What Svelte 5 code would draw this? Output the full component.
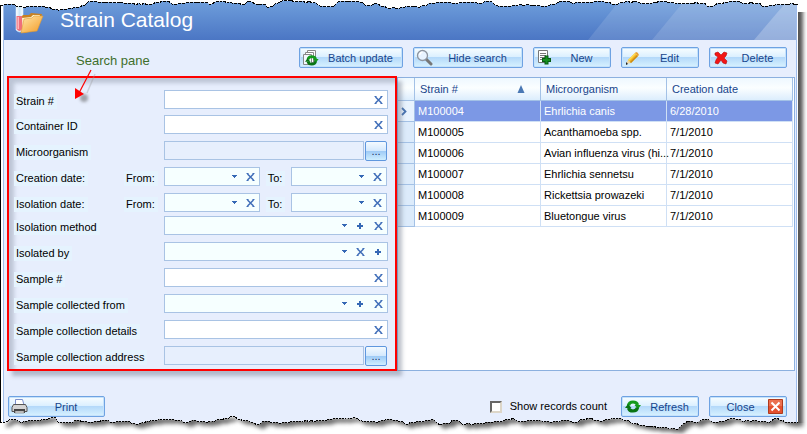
<script>
  const fields = [
    { id: 'strain', label: 'Strain #', kind: 'text' },
    { id: 'container', label: 'Container ID', kind: 'text' },
    { id: 'microorganism', label: 'Microorganism', kind: 'lookup' },
    { id: 'creation', label: 'Creation date:', kind: 'dates' },
    { id: 'isolation', label: 'Isolation date:', kind: 'dates' },
    { id: 'method', label: 'Isolation method', kind: 'combo', icons: ['plus', 'cross'] },
    { id: 'isolated-by', label: 'Isolated by', kind: 'combo', icons: ['cross', 'plus'] },
    { id: 'sample', label: 'Sample #', kind: 'text' },
    { id: 'collected-from', label: 'Sample collected from', kind: 'combo', icons: ['plus', 'cross'] },
    { id: 'details', label: 'Sample collection details', kind: 'text' },
    { id: 'address', label: 'Sample collection address', kind: 'lookup' }
  ];

  const rows = [
    ['M100004', 'Ehrlichia canis', '6/28/2010'],
    ['M100005', 'Acanthamoeba spp.', '7/1/2010'],
    ['M100006', 'Avian influenza virus (hi...', '7/1/2010'],
    ['M100007', 'Ehrlichia sennetsu', '7/1/2010'],
    ['M100008', 'Rickettsia prowazeki', '7/1/2010'],
    ['M100009', 'Bluetongue virus', '7/1/2010']
  ];

  // Key points of the torn paper edges.
  const topEdge = [
    [0, 5], [10, 4], [22, 7], [40, 6], [55, 9], [60, 10], [70, 8], [80, 7], [85, 5], [88, 2], [95, 1], [105, 3], [120, 2], [130, 4],
    [150, 4], [165, 1], [175, 4], [185, 3], [200, 2], [212, 4], [218, 1], [235, 3], [242, 5], [248, 1], [255, 4], [262, 4], [270, 7],
    [278, 3], [285, 0], [300, 2], [315, 2], [320, 6], [332, 7], [338, 2], [345, 1], [360, 2], [368, 6], [375, 3], [387, 8], [400, 8],
    [408, 6], [420, 7], [432, 3], [445, 2], [455, 3], [470, 2], [480, 3], [488, 1], [495, 5], [505, 7], [515, 5], [530, 5], [545, 6],
    [555, 4], [562, 1], [575, 3], [590, 2], [600, 1], [615, 4], [625, 2], [637, 2], [645, 4], [665, 1], [675, 4], [690, 3], [702, 3],
    [710, 6], [715, 5], [725, 2], [735, 1], [745, 3], [757, 3], [765, 6], [775, 5], [785, 4], [798, 4]
  ];
  const bottomEdge = [
    [0, 8], [6, 8], [12, 5], [16, 6], [20, 8], [28, 7], [38, 6], [48, 5], [55, 3], [58, 8], [70, 9], [76, 6], [90, 8], [105, 6],
    [113, 8], [125, 7], [136, 10], [150, 7], [165, 5], [178, 6], [185, 9], [192, 6], [205, 8], [215, 7], [225, 4], [232, 2],
    [240, 5], [250, 8], [257, 11], [265, 7], [270, 8], [282, 9], [300, 7], [320, 7], [335, 4], [345, 5], [355, 3], [362, 7],
    [375, 8], [388, 5], [396, 6], [408, 10], [418, 7], [425, 7], [433, 5], [440, 11], [447, 9], [455, 6], [462, 10], [478, 10],
    [490, 8], [503, 7], [513, 4], [520, 8], [530, 6], [537, 6], [550, 8], [565, 6], [575, 8], [588, 4], [600, 7], [618, 4],
    [630, 8], [645, 12], [660, 13], [678, 15], [685, 9], [688, 7], [695, 9], [705, 5], [715, 8], [725, 7], [732, 4], [745, 7],
    [757, 7], [770, 8], [777, 4], [785, 8], [798, 9]
  ];

  function roughen(points) {
    const out = [];
    points.forEach(([x, y], i) => {
      out.push(`${x},${y}`);
      const next = points[i + 1];
      if (!next) return;
      const steps = Math.max(1, Math.round((next[0] - x) / 3));
      for (let s = 1; s < steps; s++) {
        const t = s / steps;
        const wobble = (s + i) % 2 ? 1 : -1;
        out.push(`${Math.round(x + (next[0] - x) * t)},${Math.max(0, Math.round(y + (next[1] - y) * t + wobble * 0.7))}`);
      }
    });
    return out.join(' ');
  }
  const topLine = roughen(topEdge);
  const bottomLine = roughen(bottomEdge);
</script>

{#snippet glyph(name)}
  {#if name === 'cross'}
    <svg width="9" height="8" viewBox="0 0 9 8"><path d="M1.500 1l6 6M7.500 1l-6 6" stroke="#3f6db8" stroke-width="1.500" /><path d="M.5 .5h2M6.500 .5h2M.5 7.500h2M6.500 7.500h2" stroke="#3f6db8" /></svg>
  {:else if name === 'plus'}
    <svg width="6" height="6" viewBox="0 0 6 6"><path d="M0 3h6M3 0v6" stroke="#3568b5" stroke-width="2" /></svg>
  {:else}
    <svg width="5" height="3" viewBox="0 0 5 3"><path d="M0 0h5v1h-1v1h-1v1h-1v-1h-1v-1h-1z" fill="#3568b5" /></svg>
  {/if}
{/snippet}

{#snippet dateBox(id, label)}
  <div class="field tinted">
    <input {id} type="text" aria-label={label} />
    <button class="mini arrow" type="button" aria-label="Open calendar">{@render glyph('arrow')}</button>
    <button class="mini" type="button" aria-label="Clear">{@render glyph('cross')}</button>
  </div>
{/snippet}

{#snippet sync()}
  <path d="M3.500 6.500C4 3.500 6 3 8 3s4 1 4.500 3" fill="none" stroke="#149a1c" stroke-width="3.200" />
  <path d="M9.500 6h6.500l-3 4z" fill="#149a1c" />
  <path d="M12.500 8.500C12 11.500 10 12 8 12s-4-1-4.500-3" fill="none" stroke="#0a7413" stroke-width="3.200" />
  <path d="M6.500 9H0l3-4z" fill="#0a7413" />
{/snippet}

<div class="page">
  <main class="window">
    <header>
      <svg class="streaks" width="208" height="40" viewBox="0 0 208 40" aria-hidden="true">
        <path d="M0 40L32 0H208V40z" fill="#fff" fill-opacity=".12" />
        <path d="M64 40L97 0H208V40z" fill="#fff" fill-opacity=".13" />
        <path d="M166 40L200 0H208V40z" fill="#fff" fill-opacity=".24" />
      </svg>
      <svg class="logo" width="32" height="40" viewBox="0 0 32 40" aria-hidden="true">
        <defs>
          <linearGradient id="folder" x1="0" y1="0" x2="1" y2="1"><stop offset="0" stop-color="#ffe6a8" /><stop offset="1" stop-color="#f39a25" /></linearGradient>
          <linearGradient id="tube"><stop offset="0" stop-color="#fff" /><stop offset=".5" stop-color="#cde8f8" /><stop offset="1" stop-color="#fff" /></linearGradient>
        </defs>
        <path d="M4 4h7v26q-3 4-7 0z" fill="url(#tube)" stroke="#dcecf8" stroke-width=".6" />
        <path d="M4.500 16h6v13q-3 4-6 0z" fill="#ef6f7b" /><path d="M5.500 17h1.500v12H5.500z" fill="#ffb4b9" />
        <path d="M10 16l1-1h6l2-2 11 1-5 16-13 3z" fill="#c98222" />
        <path d="M10 18l9-1 2-2 7 0-4 14-13 3z" fill="#fff2cc" />
        <path d="M9 33l3-14 8-1 2-2h9l-6 15z" fill="url(#folder)" stroke="#e19a30" stroke-width=".6" />
      </svg>
      <h1>Strain Catalog</h1>
    </header>

    <nav class="toolbar">
      <span class="callout">Search pane</span>
      <button class="btn" type="button">
        <svg width="17" height="17" viewBox="0 0 17 17"><path d="M5.500 1.500h8v10h-8z" fill="#fff" stroke="#888" /><path d="M3.500 3.500h8v10h-8z" fill="#fff" stroke="#888" /><path d="M1.500 5.500h8v10h-8z" fill="#f4f8ff" stroke="#888" /><g transform="translate(3 5) scale(.85)">{@render sync()}</g></svg>
        <span>Batch update</span>
      </button>
      <button class="btn wide" type="button">
        <svg width="17" height="17" viewBox="0 0 17 17"><path d="M10 10l5 5" stroke="#777" stroke-width="3" stroke-linecap="round" /><circle cx="6.500" cy="6.500" r="5" fill="#e8f3ff" stroke="#8d949f" stroke-width="1.300" /><path d="M3.500 6q.5-2.500 3-3" fill="none" stroke="#fff" stroke-width="1.500" /></svg>
        <span>Hide search</span>
      </button>
      <button class="btn small" type="button">
        <svg width="17" height="17" viewBox="0 0 17 17"><path d="M2.500 1.500h9v12h-9z" fill="#fff" stroke="#777" /><path d="M4 4.500h6M4 6.500h6M4 8.500h5M4 10.500h3" stroke="#777" /><path d="M6 11h9M10.500 6.500v9" stroke="#075d10" stroke-width="4" /><path d="M7 11h7M10.500 7.500v7" stroke="#168f20" stroke-width="2" /></svg>
        <span>New</span>
      </button>
      <button class="btn small" type="button">
        <svg width="17" height="17" viewBox="0 0 17 17"><path d="M2 15l2-4 3 3z" fill="#f1d5a0" /><path d="M2 16l0-3 2 2z" fill="#222" /><path d="M4 11l7-7 3 3-7 7z" fill="#f5b622" /><path d="M4 11l7-7 1 1-7 7z" fill="#ffdc55" /><path d="M6 13l7-7 1 1-7 7z" fill="#c88916" /><path d="M11 4l1-1q2 0 3 3l-1 1z" fill="#e8a033" /></svg>
        <span>Edit</span>
      </button>
      <button class="btn small" type="button">
        <svg width="17" height="17" viewBox="0 0 17 17"><path d="M3 4l3-1 3 3 3-3 3 1-1 3-2 2 3 3-1 3-3-1-2-3-3 4-3-1 1-3 2-3-3-2z" fill="#f21616" stroke="#ba0808" stroke-width=".6" /></svg>
        <span>Delete</span>
      </button>
    </nav>

    <section class="body">
      <form class="search" aria-label="Search pane">
        {#each fields as f}
          <label for={f.id}><span>{f.label}</span></label>
          {#if f.kind === 'text'}
            <div class="field wide-cell">
              <input id={f.id} type="text" />
              <button class="mini" type="button" aria-label="Clear">{@render glyph('cross')}</button>
            </div>
          {:else if f.kind === 'lookup'}
            <div class="lookup wide-cell">
              <div class="field locked"><input id={f.id} type="text" readonly /></div>
              <button class="dots" type="button" aria-label="Browse">...</button>
            </div>
          {:else if f.kind === 'combo'}
            <div class="field tinted wide-cell">
              <div class="pick">
                <select id={f.id}><option></option></select>
                <span>{@render glyph('arrow')}</span>
              </div>
              {#each f.icons as icon}
                <button class="mini" type="button" aria-label={icon === 'plus' ? 'Add' : 'Clear'}>{@render glyph(icon)}</button>
              {/each}
            </div>
          {:else}
            <label for={f.id}><span>From:</span></label>
            <div class="range">
              {@render dateBox(f.id, f.label + ' from')}
              <label for="{f.id}-to"><span>To:</span></label>
              {@render dateBox(f.id + '-to', f.label + ' to')}
            </div>
          {/if}
        {/each}
        <svg class="pointer" width="24" height="40" viewBox="0 0 24 40" aria-hidden="true">
          <path d="M21 5L13 24" stroke="#999" stroke-width="1.500" opacity=".35" />
          <ellipse cx="10" cy="29" rx="4" ry="4" fill="#555" opacity=".5" class="soft" />
          <path d="M17 1L5 24" stroke="#f00" stroke-width="1.200" />
          <path d="M1 30V19l9 6z" fill="#f00" />
        </svg>
      </form>

      <div class="grid">
        <table>
          <colgroup><col class="c0" /><col class="c1" /><col class="c1" /><col class="c1" /></colgroup>
          <thead>
            <tr>
              <th aria-label="Row marker"></th>
              <th><div class="sorted">Strain #<svg width="8" height="8" viewBox="0 0 8 8"><path d="M4 0l3.500 8h-7z" fill="#4a78b4" /></svg></div></th>
              <th>Microorganism</th>
              <th>Creation date</th>
            </tr>
          </thead>
          <tbody>
            {#each rows as row, i}
              <tr class:selected={i === 0}>
                <td>{#if i === 0}<svg width="6" height="9" viewBox="0 0 6 9"><path d="M1 1l3.500 3.500L1 8" fill="none" stroke="#4672b0" stroke-width="1.800" /></svg>{/if}</td>
                {#each row as cell}<td>{cell}</td>{/each}
              </tr>
            {/each}
          </tbody>
        </table>
      </div>
    </section>

    <footer>
      <button class="btn print" type="button">
        <svg width="17" height="17" viewBox="0 0 17 17"><path d="M4.500 7V1.500h7L13 7" fill="#fff" stroke="#7c8fcb" /><path d="M2.500 6.500h12l1.500 3v4H1v-4z" fill="#d4d4d4" stroke="#555" /><path d="M3 11h11v4H3z" fill="#444" /><path d="M4 13h9v2H4z" fill="#ddd" stroke="#555" stroke-width=".5" /></svg>
        <span>Print</span>
      </button>
      <label class="count"><input type="checkbox" /><span>Show records count</span></label>
      <button class="btn small" type="button">
        <svg width="17" height="17" viewBox="0 0 17 17"><g transform="translate(1 1)">{@render sync()}</g></svg>
        <span>Refresh</span>
      </button>
      <button class="btn small" type="button">
        <span>Close</span>
        <svg width="17" height="17" viewBox="0 0 17 17"><path d="M1.500 1.500h14v14h-14z" fill="#e4512f" stroke="#b03a1c" /><path d="M2 2h13v6H2z" fill="#f08565" opacity=".6" /><path d="M4.500 4.500l8 8M12.500 4.500l-8 8" stroke="#fff" stroke-width="2" /></svg>
      </button>
    </footer>
  </main>

  <svg class="torn top" viewBox="0 0 807 14" preserveAspectRatio="none" aria-hidden="true">
    <path d="M0 0L{topLine} L798 12H807V0z" fill="#fff" />
    <polyline points={topLine} fill="none" stroke="#000" stroke-dasharray="3 1" shape-rendering="crispEdges" />
  </svg>
  <svg class="torn bottom" viewBox="0 0 807 20" preserveAspectRatio="none" aria-hidden="true">
    <defs><clipPath id="below"><path d="M0 20L{bottomLine} L807 9V20z" /></clipPath></defs>
    <g clip-path="url(#below)">
      <path d="M0 0H807V20H0z" fill="#fff" />
      <path class="shade" d="M8 0L{bottomLine} L798 0z" transform="translate(5 4)" fill="#666" />
    </g>
    <polyline points={bottomLine} fill="none" stroke="#000" stroke-dasharray="2 1" shape-rendering="crispEdges" />
  </svg>
</div>

<style>
  :global(body) { background: #fff; }
  .page {
    position: relative;
    overflow: hidden;
    padding: 0 9px 0 0;
    background: #fff;
    font: 11px/15px "Liberation Sans", Arial, sans-serif;
    color: #000;
  }
  .page * { box-sizing: border-box; }
  .window {
    display: flex;
    flex-direction: column;
    border-left: 1px solid #000;
    border-right: 1px solid #fff;
    background: #e7eefd;
    box-shadow: inset 2px 0 #fff, inset 3px 0 #a4bfea, inset -1px 0 #a0bdec, 5px 0 4px #555;
  }
  svg { display: block; flex: none; }
  button, input, select { font: inherit; margin: 0; padding: 0; }

  header {
    position: relative;
    display: flex;
    align-items: center;
    height: 40px;
    margin: 0 1px 0 3px;
    padding-left: 8px;
    background: linear-gradient(#6f9fdc, #4b76c4);
    color: #fff;
  }
  .streaks { position: absolute; right: 0; top: 0; }
  h1 { margin: 0 0 0 16px; font-size: 21px; line-height: 40px; font-weight: 400; }

  .toolbar {
    display: flex;
    align-items: center;
    gap: 10px;
    padding: 7px 10px 9px 75px;
  }
  .callout { margin: 6px auto 0 0; font-size: 13px; line-height: 15px; color: #3f6f2c; }
  .btn {
    display: flex;
    align-items: center;
    width: 104px;
    height: 21px;
    padding: 0 2px;
    border: 1px solid #6ea2e2;
    border-radius: 2px;
    background: linear-gradient(#f8fdff, #dcf0ff 45%, #b4d9fa 50%, #d8f2ff);
    box-shadow: inset 0 0 0 1px #c6e2fb;
    color: #17458c;
  }
  .btn span { flex: 1; padding: 2px 0 0 2px; text-align: center; }
  .btn.wide { width: 110px; }
  .btn.small { width: 78px; }
  .btn.print { width: 97px; margin-right: auto; }

  .body { display: flex; padding: 0 2px 0 6px; }
  .search {
    position: relative;
    z-index: 1;
    flex: 0 0 390px;
    display: grid;
    grid-template-columns: 110px 40px 1fr;
    grid-template-rows: 25px 26px 26px 26px 23px 26px 26px 26px 26px 26px 23px;
    align-items: start;
    margin-top: -1px;
    padding: 12px 7px 0 5px;
    border: 2px solid #f00;
    box-shadow: 5px 5px 4px rgba(110, 120, 140, .45), inset 5px 5px 4px rgba(110, 120, 140, .35);
  }
  .search label { padding-top: 4px; white-space: nowrap; }
  .search label span { display: inline-block; padding: 0 3px 0 2px; background: #e5f3fe; }
  .wide-cell { grid-column: 2 / 4; }
  .search .wide-cell { margin-left: 40px; }
  .field {
    display: flex;
    height: 19px;
    border: 1px solid #a9c3e4;
    background: #fff;
  }
  .tinted { background: #f6ffff; }
  .locked { flex: 1; background: #e7effd; }
  .field input { flex: 1; min-width: 0; border: 0; outline: 0; background: none; }
  .mini {
    display: flex;
    align-items: center;
    justify-content: center;
    width: 18px;
    border: 0;
    background: none;
  }
  .arrow { width: 13px; }
  .pick { display: grid; flex: 1; }
  .pick select, .pick span { grid-area: 1 / 1; }
  .pick select { appearance: none; border: 0; background: none; outline: 0; }
  .pick span { align-self: center; justify-self: end; padding-right: 4px; pointer-events: none; }
  .lookup { display: flex; gap: 1px; padding-right: 1px; }
  .dots {
    width: 22px;
    height: 20px;
    border: 1px solid #5f97de;
    border-radius: 2px;
    background: linear-gradient(#f4faff, #d3e8fd 50%, #9fcbf6 52%, #cfeeff);
    color: #17305c;
    line-height: 18px;
  }
  .range { display: flex; justify-content: space-between; margin-left: 0; padding-right: 1px; }
  .range .field { width: 96px; }
  .pointer { position: absolute; left: 65px; top: -9px; }
  .soft { filter: blur(1.500px); }

  .grid {
    flex: 1;
    min-width: 0;
    padding-right: 1px;
    border: 1px solid #8cb0df;
    background: #fff;
  }
  table { width: 100%; table-layout: fixed; border-collapse: separate; border-spacing: 0; }
  .c0 { width: 17px; }
  .c1 { width: 126px; }
  th {
    height: 23px;
    padding: 0 5px;
    border: 1px solid #a3c1e6;
    border-width: 0 1px 1px 0;
    background: linear-gradient(#eef8ff, #fbfeff 45%, #dcedfd);
    color: #17458c;
    font-weight: 400;
    text-align: left;
  }
  .sorted { display: flex; justify-content: space-between; align-items: center; padding-right: 10px; }
  td {
    height: 21px;
    padding: 0 0 0 3px;
    border: 1px solid #cfe0f5;
    border-width: 0 1px 1px 0;
    white-space: nowrap;
  }
  td:first-child { border-color: #a3c1e6; background: #dcebfb; }
  .selected td { background: #7c98e5; color: #fff; }
  .selected td:first-child { background: #e8f3fe; }

  footer {
    display: flex;
    align-items: center;
    gap: 10px;
    padding: 25px 10px 17px 7px;
  }
  .count { display: flex; align-items: center; gap: 8px; margin-right: 4px; }
  .count input {
    appearance: none;
    width: 12px;
    height: 12px;
    border: 2px solid;
    border-color: #666 #ddd6c8 #ddd6c8 #666;
    background: #fff;
  }

  .torn { position: absolute; left: 0; width: 100%; z-index: 2; pointer-events: none; }
  .top { top: 0; height: 14px; }
  .bottom { bottom: 0; height: 20px; }
  .shade { filter: blur(2px); }
</style>
